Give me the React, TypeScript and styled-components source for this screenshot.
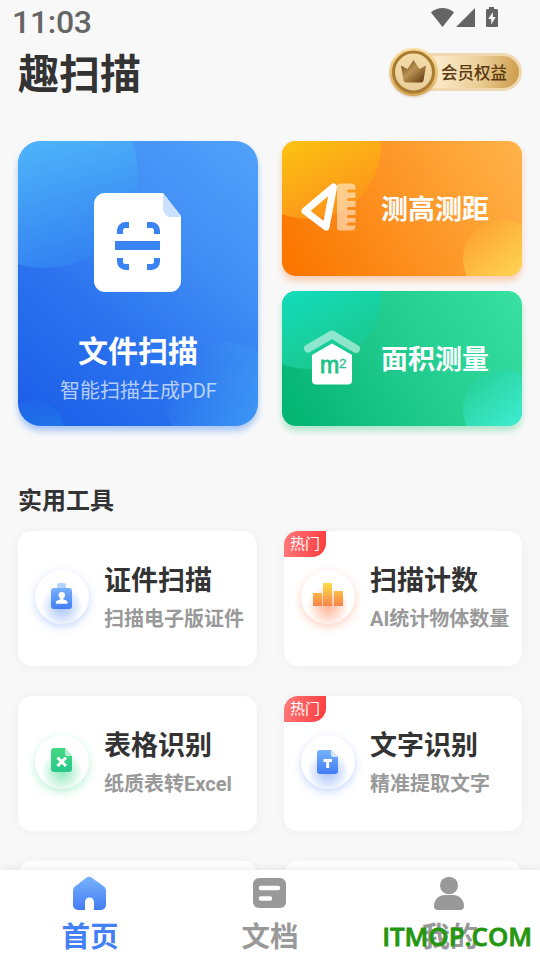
import React from "react";
import styled, { createGlobalStyle } from "styled-components";

const GlobalStyle = createGlobalStyle`
  * { box-sizing: border-box; }
  body {
    margin: 0;
    background: #f8f8f8;
    font-family: Roboto, "Noto Sans CJK SC", sans-serif;
    color: #333;
  }
`;

const Screen = styled.div`
  display: flex;
  flex-direction: column;
  width: 540px;
  height: 960px;
  overflow: hidden;
  background: #f8f8f8;
`;

const StatusBar = styled.div`
  display: flex;
  flex: none;
  justify-content: space-between;
  align-items: flex-start;
  height: 46px;
  padding: 0 41px 0 12px;
`;

const Clock = styled.span`
  font-size: 32px;
  line-height: 45px;
  font-weight: 500;
  letter-spacing: -0.3px;
  color: #656565;
`;

const StatusIcons = styled.svg`
  display: block;
  width: 68px;
  height: 20px;
  margin-top: 7px;
`;

const Header = styled.header`
  display: flex;
  flex: none;
  justify-content: space-between;
  align-items: center;
  height: 52px;
  padding: 0 18px;
`;

const Title = styled.h1`
  margin: 0;
  padding-bottom: 2px;
  font-size: 41px;
  line-height: 50px;
  font-weight: 700;
  font-family: "Noto Sans CJK SC", sans-serif;
`;

const VipButton = styled.button`
  display: flex;
  align-items: center;
  width: 133px;
  height: 52px;
  padding: 0;
  border: 0;
  background: none;
`;

const VipMedal = styled.svg`
  position: relative;
  z-index: 1;
  display: block;
  flex: none;
  width: 52px;
  height: 52px;
  filter: drop-shadow(0 1px 1px rgba(150, 105, 40, 0.35));
`;

const VipLabel = styled.span`
  flex: 1;
  height: 38px;
  margin-left: -30px;
  padding-left: 27px;
  border: 3px solid #efd9b0;
  border-radius: 0 19px 19px 0;
  background: linear-gradient(100deg, #fae8c7 25%, #ecd09a 60%, #cc9a49 100%);
  color: #5b3a12;
  font-family: "Noto Sans CJK SC", sans-serif;
  font-size: 16.5px;
  line-height: 32px;
  font-weight: 500;
  text-align: left;
  white-space: nowrap;
`;

const Content = styled.main`
  flex: 1;
  min-height: 0;
  padding: 43px 18px 0;
  overflow: hidden;
`;

const Hero = styled.section`
  display: grid;
  grid-template-columns: 240px 240px;
  grid-template-rows: 135px 135px;
  gap: 15px 24px;
`;

const HeroTile = styled.div<{ $bg: string; $shadow: string; $radius: number }>`
  position: relative;
  overflow: hidden;
  border-radius: ${(p) => p.$radius}px;
  background: ${(p) => p.$bg};
  box-shadow: 0 5px 6px ${(p) => p.$shadow};
  color: #fff;
`;

const MainTile = styled(HeroTile)`
  display: flex;
  flex-direction: column;
  align-items: center;
  grid-row: span 2;
  padding-top: 52px;
`;

const SideTile = styled(HeroTile)`
  display: flex;
  align-items: center;
  padding-left: 18px;
`;

const Bubble = styled.span<{ $x: number; $y: number; $size: number; $bg: string }>`
  position: absolute;
  left: ${(p) => p.$x}px;
  top: ${(p) => p.$y}px;
  width: ${(p) => p.$size}px;
  height: ${(p) => p.$size}px;
  border-radius: 50%;
  background: ${(p) => p.$bg};
`;

const ScanIcon = styled.svg`
  position: relative;
  display: block;
  width: 88px;
  height: 100px;
`;

const MainTitle = styled.span`
  position: relative;
  margin-top: 37px;
  font-size: 30px;
  line-height: 44px;
  font-weight: 700;
`;

const MainNote = styled.span`
  position: relative;
  padding-left: 1px;
  font-size: 20px;
  line-height: 34px;
  font-weight: 400;
  color: rgba(255, 255, 255, 0.68);
`;

const SideIcon = styled.svg`
  position: relative;
  display: block;
  flex: none;
  width: 64px;
  height: 64px;
  margin-bottom: 2px;
`;

const SideTitle = styled.span`
  position: relative;
  margin-left: 17px;
  padding-top: 2px;
  font-size: 27px;
  line-height: 40px;
  font-weight: 700;
`;

const SectionTitle = styled.h2`
  margin: 57px 0 12px;
  font-size: 24px;
  line-height: 36px;
  font-weight: 700;
`;

const ToolGrid = styled.section`
  display: grid;
  grid-template-columns: 239px 238px;
  grid-auto-rows: 135px;
  gap: 30px 27px;
`;

const ToolCard = styled.article`
  position: relative;
  display: flex;
  align-items: center;
  padding: 0 0 4px 17px;
  border-radius: 14px;
  background: #fff;
  box-shadow: 0 1px 12px rgba(0, 0, 0, 0.045);
`;

const HotTag = styled.span`
  position: absolute;
  left: 0;
  top: 0;
  width: 42px;
  height: 26px;
  border-radius: 14px 0 14px 0;
  background: linear-gradient(100deg, #ff7b7b, #fe3b3d);
  color: #fff;
  font-size: 15px;
  line-height: 26px;
  text-align: center;
`;

const ToolIcon = styled.span<{ $glow: string }>`
  flex: none;
  width: 54px;
  height: 54px;
  border-radius: 50%;
  background: radial-gradient(circle at 50% 68%, ${(p) => p.$glow}b0 0, ${(p) => p.$glow}70 18%, ${(p) => p.$glow}00 46%), #fff;
  box-shadow: 0 3px 8px ${(p) => p.$glow}70;
`;

const ToolSvg = styled.svg`
  display: block;
  width: 54px;
  height: 54px;
`;

const ToolText = styled.div`
  display: flex;
  flex-direction: column;
  margin-left: 15px;
  padding-top: 4px;
  white-space: nowrap;
`;

const ToolName = styled.span`
  font-size: 27px;
  line-height: 40px;
  font-weight: 700;
`;

const ToolNote = styled.span`
  font-size: 20px;
  line-height: 36px;
  font-weight: 700;
  color: #999;
`;

const TabBar = styled.nav`
  position: relative;
  display: grid;
  flex: none;
  grid-template-columns: repeat(3, 1fr);
  height: 90px;
  background: #fff;
  box-shadow: 0 0 8px rgba(0, 0, 0, 0.1);
`;

const Tab = styled.div<{ $active?: boolean }>`
  display: flex;
  flex-direction: column;
  align-items: center;
  padding-top: 5px;
  color: ${(p) => (p.$active ? "#437ff5" : "#999")};
  font-size: 28.5px;
  line-height: 42px;
  font-weight: 700;
`;

const TabIcon = styled.svg`
  display: block;
  width: 36px;
  height: 36px;
  margin-bottom: 6px;
`;

const Watermark = styled.span`
  position: absolute;
  right: 8px;
  bottom: 7px;
  color: #259610;
  font-family: "Open Sans", sans-serif;
  font-size: 25.8px;
  line-height: 34px;
  font-weight: 600;
  -webkit-text-stroke: 0.8px #259610;
`;

function IdIcon() {
  return (
    <ToolSvg viewBox="0 0 54 54">
      <rect x="22" y="13" width="9" height="8" rx="2" fill="#b5d3fc" />
      <rect x="16" y="18" width="21" height="21" rx="3" fill="url(#blueFade)" />
      <circle cx="26.800" cy="25.300" r="3.200" fill="#fff" />
      <path d="M25.300 27h3v2.400c3 .6 4.300 1.500 4.300 3.200 0 1-.8 1.200-1.600 1.200h-8.600c-.8 0-1.600-.2-1.600-1.200 0-1.700 1.500-2.600 4.500-3.200z" fill="#fff" />
    </ToolSvg>
  );
}

function CountIcon() {
  return (
    <ToolSvg viewBox="0 0 54 54">
      <path d="M12 23h9v13h-9zM22 13h9v23h-9zM33 21h9v15h-9z" fill="url(#barFade)" />
    </ToolSvg>
  );
}

function SheetIcon() {
  return (
    <ToolSvg viewBox="0 0 54 54">
      <path d="M19 13h11l7 8v13a3 3 0 0 1-3 3H19a3 3 0 0 1-3-3V16a3 3 0 0 1 3-3z" fill="url(#greenFade)" />
      <path d="M30 13l7 8h-5a2 2 0 0 1-2-2z" fill="#b8f0d4" />
      <path d="M22.500 22.500l8.500 8.500M31 22.500L22.500 31" stroke="#fff" strokeWidth="3" />
    </ToolSvg>
  );
}

function TextIcon() {
  return (
    <ToolSvg viewBox="0 0 54 54">
      <path d="M19 15h11l7 7v14a3 3 0 0 1-3 3H19a3 3 0 0 1-3-3V18a3 3 0 0 1 3-3z" fill="url(#blueFade)" />
      <path d="M30 15l7 7h-5a2 2 0 0 1-2-2z" fill="#d6e6ff" />
      <path d="M22.500 24h8.500v3h-2.800v6h-3v-6h-2.700z" fill="#fff" />
    </ToolSvg>
  );
}

const tools = [
  { name: "证件扫描", note: "扫描电子版证件", glow: "#7fa8fa", hot: false, icon: <IdIcon /> },
  { name: "扫描计数", note: "AI统计物体数量", glow: "#ff966c", hot: true, icon: <CountIcon /> },
  { name: "表格识别", note: "纸质表转Excel", glow: "#62dfa3", hot: false, icon: <SheetIcon /> },
  { name: "文字识别", note: "精准提取文字", glow: "#7fa8fa", hot: true, icon: <TextIcon /> },
];

const GradientDefs = styled.svg`
  position: absolute;
  width: 0;
  height: 0;
`;

function SharedGradients() {
  return (
    <GradientDefs>
      <defs>
        <linearGradient id="blueFade" x1="0" y1="0" x2="0" y2="1">
          <stop offset="0" stopColor="#78b2fb" />
          <stop offset="1" stopColor="#437df5" />
        </linearGradient>
        <linearGradient id="greenFade" x1="0" y1="0" x2="0" y2="1">
          <stop offset="0" stopColor="#43d982" />
          <stop offset="1" stopColor="#29c88b" />
        </linearGradient>
        <linearGradient id="barFade" gradientUnits="userSpaceOnUse" x1="0" y1="13" x2="0" y2="36">
          <stop offset="0" stopColor="#fde047" />
          <stop offset="1" stopColor="#f68249" />
        </linearGradient>
        <linearGradient id="medalFade" x1="0" y1="0" x2="0" y2="1">
          <stop offset="0" stopColor="#fbe09a" />
          <stop offset="1" stopColor="#d6a551" />
        </linearGradient>
        <linearGradient id="medalFace" x1="0" y1="0" x2="0" y2="1">
          <stop offset="0" stopColor="#f4dda9" />
          <stop offset="1" stopColor="#e9cd99" />
        </linearGradient>
        <linearGradient id="crownFade" x1="0" y1="0" x2="1" y2="1">
          <stop offset="0" stopColor="#6d430e" />
          <stop offset="0.45" stopColor="#b99255" />
          <stop offset="1" stopColor="#5c3408" />
        </linearGradient>
      </defs>
    </GradientDefs>
  );
}

export default function App() {
  return (
    <Screen>
      <GlobalStyle />
      <SharedGradients />
      <StatusBar>
        <Clock>11:03</Clock>
        <StatusIcons viewBox="0 0 68 20" fill="#646464">
          <path d="M0 5.500C6-.500 17-.500 23 5.500L11.500 20z" />
          <path d="M44 1v19H25z" />
          <path d="M58 0h5v2h2.500a1.500 1.500 0 0 1 1.500 1.500v15a1.500 1.500 0 0 1-1.500 1.500h-9a1.500 1.500 0 0 1-1.500-1.500v-15A1.500 1.500 0 0 1 56.500 2H58z" />
          <path d="M61.800 5v5h3l-4.600 7.500V12h-3z" fill="#f8f8f8" />
        </StatusIcons>
      </StatusBar>
      <Header>
        <Title>趣扫描</Title>
        <VipButton>
          <VipMedal viewBox="0 0 52 52">
            <circle cx="24.500" cy="26" r="24" fill="url(#medalFade)" />
            <circle cx="24.500" cy="26" r="20" fill="url(#medalFace)" stroke="#a87b32" strokeWidth="3" />
            <path d="M12 19.500l6.500 3.500 6-9 6 9 6.500-3.500-2.500 15q-.4 2-2.400 2H17q-2 0-2.400-2z" fill="url(#crownFade)" />
          </VipMedal>
          <VipLabel>会员权益</VipLabel>
        </VipButton>
      </Header>

      <Content>
        <Hero>
          <MainTile
            $radius={23}
            $shadow="rgba(60, 130, 245, 0.42)"
            $bg="linear-gradient(40deg, #1a5de8 0%, #2a72ee 35%, #418ff5 68%, #51a2fb 100%)"
          >
            <Bubble $x={-67} $y={-60} $size={187} $bg="linear-gradient(165deg, #51b7fa 30%, #2e7af0 100%)" />
            <Bubble $x={148} $y={201} $size={118} $bg="linear-gradient(125deg, rgba(60,150,245,0) 18%, #3e9bf5 85%)" />
            <Bubble $x={-14} $y={259} $size={60} $bg="linear-gradient(180deg, rgba(34,120,235,.15), #1f7be9 70%)" />
            <ScanIcon viewBox="0 0 88 100">
              <path d="M11 0h58l18 23v65a11 11 0 0 1-11 11H11A11 11 0 0 1 0 88V11A11 11 0 0 1 11 0z" fill="#fff" />
              <path d="M69 0l18 24H77a8 8 0 0 1-8-8z" fill="#cce0ff" />
              <path
                d="M35 32h-3.500a5.500 5.500 0 0 0-5.500 5.500V41M53 32h4.500a5.500 5.500 0 0 1 5.500 5.500V41M26 65v3.500a5.500 5.500 0 0 0 5.500 5.500H35M63 65v3.500a5.500 5.500 0 0 1-5.500 5.500H53"
                fill="none"
                stroke="#3a83f3"
                strokeWidth="6"
              />
              <rect x="21" y="48" width="45" height="9" fill="#3a83f3" />
            </ScanIcon>
            <MainTitle>文件扫描</MainTitle>
            <MainNote>智能扫描生成PDF</MainNote>
          </MainTile>

          <SideTile
            $radius={14}
            $shadow="rgba(255, 125, 40, 0.32)"
            $bg="linear-gradient(60deg, #fa7600 5%, #fd9526 52%, #ffb44a 100%)"
          >
            <Bubble $x={-46} $y={-67} $size={145} $bg="linear-gradient(155deg, #fcc512 40%, #fc8d1c 95%)" />
            <Bubble $x={181} $y={79} $size={78} $bg="linear-gradient(140deg, #fd9f30 5%, #ffd754 75%)" />
            <SideIcon viewBox="0 0 64 64">
              <path d="M5 35L33.500 11 26 51z" fill="none" stroke="#fff" strokeWidth="7" strokeLinejoin="round" />
              <path
                d="M40 7.500h11q4.500 0 4.500 4.500v1.500h-7a1.500 1.500 0 0 0 0 3h7v5.500h-7a1.500 1.500 0 0 0 0 3h7V31h-7a1.500 1.500 0 0 0 0 3h7v5h-7a1.500 1.500 0 0 0 0 3h7v4.500h-7a1.500 1.500 0 0 0 0 3h7v.5q0 4.500-4.500 4.500H40q-3 0-3-3V10.500q0-3 3-3z"
                fill="#fff"
                fillOpacity=".5"
              />
            </SideIcon>
            <SideTitle>测高测距</SideTitle>
          </SideTile>

          <SideTile
            $radius={14}
            $shadow="rgba(40, 195, 120, 0.34)"
            $bg="linear-gradient(60deg, #04b574 5%, #20ca8d 48%, #38e0a2 100%)"
          >
            <Bubble $x={-46} $y={-67} $size={145} $bg="linear-gradient(155deg, #12dfc3 35%, #1bc78b 90%)" />
            <Bubble $x={181} $y={79} $size={78} $bg="linear-gradient(140deg, #25cf95 5%, #40edd4 75%)" />
            <SideIcon viewBox="0 0 64 64">
              <path d="M8 22.500L32 8.500 56 23" fill="none" stroke="#fff" strokeOpacity=".5" strokeWidth="8" strokeLinecap="round" strokeLinejoin="round" />
              <path d="M32 17.500l20 11.500v25.500a4 4 0 0 1-4 4H16a4 4 0 0 1-4-4V29z" fill="#fff" />
              <text x="20" y="46.500" fill="#1fc28a" stroke="#1fc28a" strokeWidth=".9" fontFamily="Liberation Sans, sans-serif" fontSize="23">m</text>
              <text x="39" y="41.500" fill="#1fc28a" stroke="#1fc28a" strokeWidth=".3" fontFamily="Liberation Sans, sans-serif" fontSize="13.500">2</text>
            </SideIcon>
            <SideTitle>面积测量</SideTitle>
          </SideTile>
        </Hero>

        <SectionTitle>实用工具</SectionTitle>
        <ToolGrid>
          {tools.map((tool) => (
            <ToolCard key={tool.name}>
              {tool.hot && <HotTag>热门</HotTag>}
              <ToolIcon $glow={tool.glow}>{tool.icon}</ToolIcon>
              <ToolText>
                <ToolName>{tool.name}</ToolName>
                <ToolNote>{tool.note}</ToolNote>
              </ToolText>
            </ToolCard>
          ))}
          <ToolCard />
          <ToolCard />
        </ToolGrid>
      </Content>

      <TabBar>
        <Tab $active>
          <TabIcon viewBox="0 0 36 36">
            <path d="M13.500 3.200q3.500-2.700 7 0L32 11.500q2 1.500 2 4V30a5 5 0 0 1-5 5h-7v-8a4.500 4.500 0 0 0-9 0v8H6a5 5 0 0 1-5-5V15.500q0-2.500 2-4z" fill="url(#blueFade)" />
          </TabIcon>
          首页
        </Tab>
        <Tab>
          <TabIcon viewBox="0 0 36 36">
            <rect x="1" y="3" width="33" height="30" rx="6" fill="#999" />
            <path d="M9 13h17M9 23.500h9" stroke="#fff" strokeWidth="4.500" strokeLinecap="round" />
          </TabIcon>
          文档
        </Tab>
        <Tab>
          <TabIcon viewBox="0 0 36 36" fill="#999">
            <ellipse cx="17" cy="10.500" rx="9" ry="8.700" />
            <path d="M13 20h8c6 0 11 4.500 11 11q0 4-4 4H6q-4 0-4-4c0-6.500 5-11 11-11z" />
          </TabIcon>
          我的
        </Tab>
        <Watermark>ITMOP.COM</Watermark>
      </TabBar>
    </Screen>
  );
}
